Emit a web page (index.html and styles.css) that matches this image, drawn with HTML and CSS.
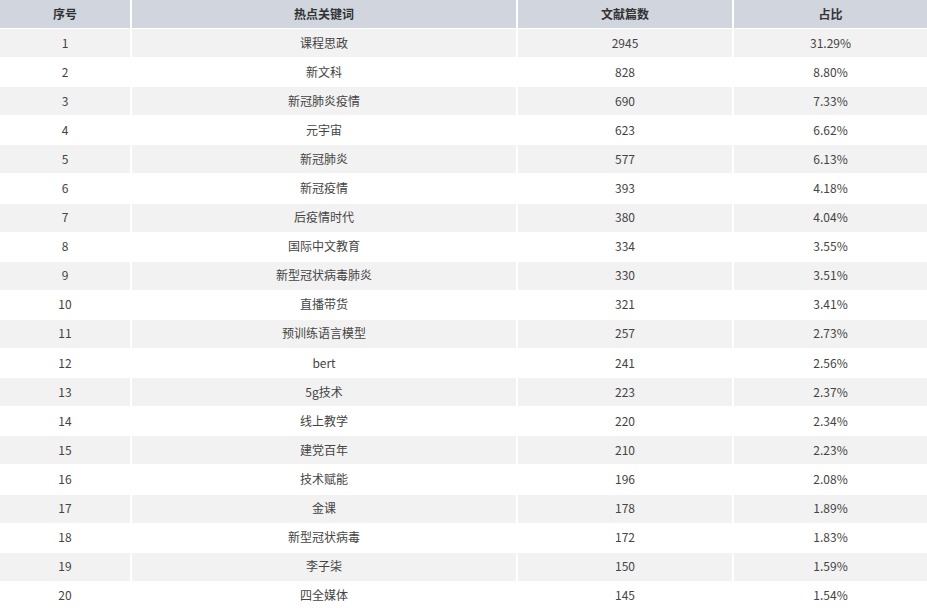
FILE: index.html
```html
<!DOCTYPE html>
<html lang="zh">
<head>
<meta charset="utf-8">
<link rel="stylesheet" href="styles.css">
</head>
<body>
<table class="data">
<colgroup><col class="c1"><col class="c2"><col class="c3"><col class="c4"></colgroup>
<thead>
<tr><th>序号</th><th>热点关键词</th><th>文献篇数</th><th>占比</th></tr>
</thead>
<tbody>
<tr><td>1</td><td>课程思政</td><td>2945</td><td>31.29%</td></tr>
<tr><td>2</td><td>新文科</td><td>828</td><td>8.80%</td></tr>
<tr><td>3</td><td>新冠肺炎疫情</td><td>690</td><td>7.33%</td></tr>
<tr><td>4</td><td>元宇宙</td><td>623</td><td>6.62%</td></tr>
<tr><td>5</td><td>新冠肺炎</td><td>577</td><td>6.13%</td></tr>
<tr><td>6</td><td>新冠疫情</td><td>393</td><td>4.18%</td></tr>
<tr><td>7</td><td>后疫情时代</td><td>380</td><td>4.04%</td></tr>
<tr><td>8</td><td>国际中文教育</td><td>334</td><td>3.55%</td></tr>
<tr><td>9</td><td>新型冠状病毒肺炎</td><td>330</td><td>3.51%</td></tr>
<tr><td>10</td><td>直播带货</td><td>321</td><td>3.41%</td></tr>
<tr><td>11</td><td>预训练语言模型</td><td>257</td><td>2.73%</td></tr>
<tr><td>12</td><td>bert</td><td>241</td><td>2.56%</td></tr>
<tr><td>13</td><td>5g技术</td><td>223</td><td>2.37%</td></tr>
<tr><td>14</td><td>线上教学</td><td>220</td><td>2.34%</td></tr>
<tr><td>15</td><td>建党百年</td><td>210</td><td>2.23%</td></tr>
<tr><td>16</td><td>技术赋能</td><td>196</td><td>2.08%</td></tr>
<tr><td>17</td><td>金课</td><td>178</td><td>1.89%</td></tr>
<tr><td>18</td><td>新型冠状病毒</td><td>172</td><td>1.83%</td></tr>
<tr><td>19</td><td>李子柒</td><td>150</td><td>1.59%</td></tr>
<tr><td>20</td><td>四全媒体</td><td>145</td><td>1.54%</td></tr>
</tbody>
</table>
</body>
</html>
```
FILE: styles.css
```css
html, body {
  margin: 0;
  padding: 0;
  background: #fff;
}
.data {
  width: 927px;
  border-collapse: collapse;
  table-layout: fixed;
  font-family: "Noto Sans CJK SC", "Noto Sans", sans-serif;
  font-size: 12px;
  color: #333;
}
.c1 { width: 131px; }
.c2 { width: 386px; }
.c3 { width: 216px; }
.c4 { width: 194px; }
.data th, .data td {
  height: 27px;
  padding: 0 0 1px 0;
  text-align: center;
  vertical-align: middle;
  border-bottom: 1px solid #fff;
  border-right: 2px solid #fff;
  line-height: 16px;
}
.data td {
  height: 27.1px;
  color: #444;
}
.data th:last-child, .data td:last-child { border-right: 0; }
.data th {
  background: #d0d5de;
  font-weight: bold;
  color: #333;
}
.data tbody tr:nth-child(odd) td { background: #f2f2f2; }
.data tbody tr:nth-child(even) td { background: #fff; }
```
